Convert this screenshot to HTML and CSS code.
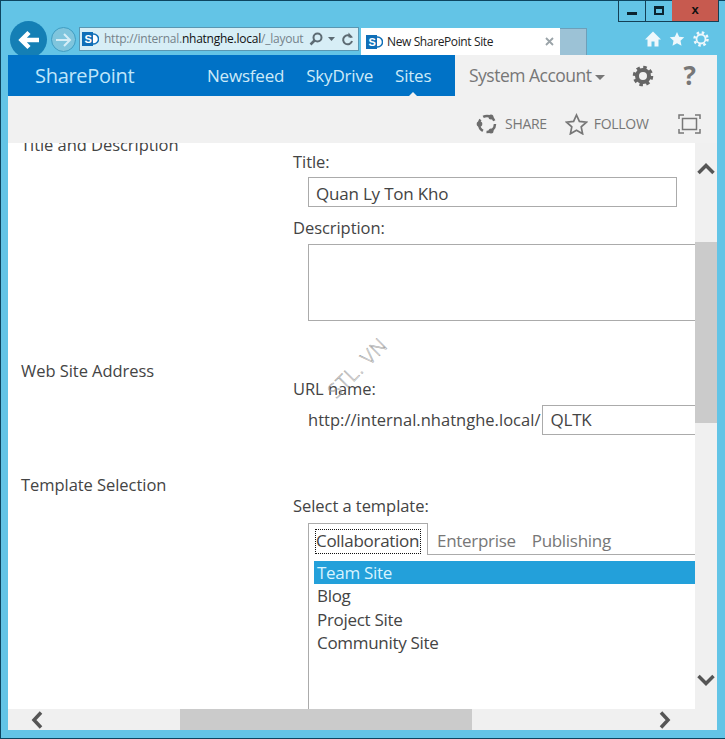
FILE: index.html
```html
<!DOCTYPE html>
<html lang="en">
<head>
<meta charset="utf-8">
<title>New SharePoint Site</title>
<link rel="stylesheet" href="styles.css">
</head>
<body>
<div class="window">
  <header class="chrome">
    <div class="controls">
      <div class="ctl ctl-min"><span class="min-glyph"></span></div>
      <div class="ctl ctl-max"><span class="max-glyph"></span></div>
      <div class="ctl ctl-close">x</div>
    </div>
    <div class="toolbar">
      <div class="back"><svg width="24" height="22" viewBox="0 0 24 22"><path d="M22 11H6M12 3.500 4.500 11l7.500 7.500" fill="none" stroke="#fff" stroke-width="4.500"/></svg></div>
      <div class="forward"><svg width="18" height="16" viewBox="0 0 18 16"><path d="M1 8h14M9 2l6 6-6 6" fill="none" stroke="#d5eef7" stroke-width="2"/></svg></div>
      <div class="address">
        <svg class="sp" width="17" height="16" viewBox="0 0 17 16"><circle cx="11.500" cy="8" r="5" fill="#fff" stroke="#0f6fb8" stroke-width="1.500"/><rect x="0" y="1" width="11" height="14" fill="#0f6fb8"/><text x="2.500" y="12" class="sp-s">S</text></svg>
        <span class="url">http://internal.<b>nhatnghe.local</b>/_layout</span>
        <svg class="addr-ico" width="14" height="14" viewBox="0 0 14 14"><circle cx="8.500" cy="5.500" r="4" fill="none" stroke="#5d6b73" stroke-width="2"/><path d="M5.500 8.500 1.500 12.500" stroke="#5d6b73" stroke-width="2.500"/></svg>
        <svg class="addr-ico" width="8" height="5" viewBox="0 0 8 5"><path d="M0 0h7L3.500 4z" fill="#5d6b73"/></svg>
        <svg class="addr-ico" width="13" height="14" viewBox="0 0 13 14"><path d="M10.500 5.500A4.500 4.500 0 1 0 11 9" fill="none" stroke="#5d6b73" stroke-width="2"/><path d="M7.500 0.500v5h4.500z" fill="#5d6b73"/></svg>
      </div>
      <div class="tab">
        <svg class="sp" width="17" height="16" viewBox="0 0 17 16"><circle cx="11.500" cy="8" r="5" fill="#fff" stroke="#0f6fb8" stroke-width="1.500"/><rect x="0" y="1" width="11" height="14" fill="#0f6fb8"/><text x="2.500" y="12" class="sp-s">S</text></svg>
        <span class="tab-title">New SharePoint Site</span>
        <svg class="tab-x" width="9" height="9" viewBox="0 0 9 9"><path d="M1 1l7 7M8 1 1 8" stroke="#9aa3a8" stroke-width="1.800"/></svg>
      </div>
      <div class="newtab"></div>
      <div class="tools">
        <svg width="16" height="16" viewBox="0 0 16 16"><path d="M8 0.500 0 8.500h2.500V15.500h4v-5h3v5h4V8.500H16z" fill="#eef8fc"/></svg>
        <svg width="16" height="16" viewBox="0 0 17 16"><path d="M8.500 0.500l2.300 5 5.400.6-4 3.700 1.100 5.400-4.800-2.700-4.800 2.700 1.100-5.400-4-3.700 5.400-.6z" fill="#eef8fc"/></svg>
        <svg width="16" height="16" viewBox="0 0 16 16"><circle cx="8" cy="8" r="4.500" fill="none" stroke="#eef8fc" stroke-width="1.800"/><circle cx="8" cy="8" r="6.500" fill="none" stroke="#eef8fc" stroke-width="2.500" stroke-dasharray="2.500 2.600"/></svg>
      </div>
    </div>
  </header>

  <div class="page">
    <div class="suite">
      <div class="suite-blue">
        <span class="brand">SharePoint</span>
        <nav class="nav">
          <span>Newsfeed</span>
          <span>SkyDrive</span>
          <span class="nav-active">Sites</span>
        </nav>
      </div>
      <div class="suite-user">
        <span class="account">System Account</span>
        <svg class="caret" width="10" height="5" viewBox="0 0 10 5"><path d="M0 0h10L5 5z" fill="#777"/></svg>
        <svg class="gear" width="22" height="22" viewBox="0 0 22 22"><circle cx="11" cy="11" r="6" fill="none" stroke="#666" stroke-width="4"/><circle cx="11" cy="11" r="8.500" fill="none" stroke="#666" stroke-width="3.500" stroke-dasharray="3.400 3.270"/></svg>
        <span class="help">?</span>
      </div>
    </div>
    <div class="actions">
      <svg width="22" height="22" viewBox="0 0 22 22"><circle cx="11" cy="11" r="8" fill="none" stroke="#6d6d6d" stroke-width="2.500" stroke-dasharray="13 3.750"/><circle cx="3.500" cy="11" r="2.800" fill="#6d6d6d"/><circle cx="15" cy="4" r="2.500" fill="#6d6d6d"/><circle cx="15" cy="18" r="2.500" fill="#6d6d6d"/></svg>
      <span class="act-label">SHARE</span>
      <svg class="act-star" width="23" height="22" viewBox="0 0 23 22"><path d="M11.500 2l2.900 6.400 7 .8-5.200 4.700 1.400 6.900-6.100-3.500-6.100 3.500 1.400-6.900L1.600 9.200l7-.8z" fill="none" stroke="#777" stroke-width="1.700"/></svg>
      <span class="act-label">FOLLOW</span>
      <svg class="act-focus" width="23" height="20" viewBox="0 0 23 20"><path d="M1 5V1h5M17 1h5v4M22 15v4h-5M6 19H1v-4" fill="none" stroke="#777" stroke-width="1.500"/><rect x="4.500" y="4.500" width="14" height="11" fill="none" stroke="#777" stroke-width="1.500"/></svg>
    </div>
    <div class="viewport">
      <div class="scroller">
        <main class="form">
          <section class="row row-title">
            <h2 class="row-head">Title and Description</h2>
            <div class="fields">
              <label class="lbl">Title:</label>
              <div class="input input-title">Quan Ly Ton Kho</div>
              <label class="lbl lbl-desc">Description:</label>
              <div class="textarea"></div>
            </div>
          </section>
          <section class="row row-url">
            <h2 class="row-head">Web Site Address</h2>
            <div class="fields fields-url">
              <label class="lbl">URL name:</label>
              <div class="url-line"><span>http://internal.nhatnghe.local/</span><div class="input input-url">QLTK</div></div>
            </div>
          </section>
          <section class="row row-tpl">
            <h2 class="row-head">Template Selection</h2>
            <div class="fields fields-tpl">
              <label class="lbl">Select a template:</label>
              <div class="tabset">
                <div class="tabbar">
                  <div class="t-tab"><span class="t-focus">Collaboration</span></div>
                  <span class="t-other">Enterprise</span>
                  <span class="t-other">Publishing</span>
                </div>
                <ul class="list">
                  <li class="selected">Team Site</li>
                  <li>Blog</li>
                  <li>Project Site</li>
                  <li>Community Site</li>
                </ul>
              </div>
            </div>
          </section>
        </main>
        <div class="watermark">STL. VN</div>
      </div>
      <div class="vbar">
        <svg width="18" height="12" viewBox="0 0 18 12"><path d="M1.500 10 9 2.500 16.500 10" fill="none" stroke="#555" stroke-width="3.500"/></svg>
        <div class="vtrack"><div class="vthumb"></div></div>
        <svg width="18" height="12" viewBox="0 0 18 12"><path d="M1.500 2 9 9.500 16.500 2" fill="none" stroke="#555" stroke-width="3.500"/></svg>
      </div>
      <div class="hbar">
        <svg width="12" height="18" viewBox="0 0 12 18"><path d="M10 1.500 3 9l7 7.500" fill="none" stroke="#555" stroke-width="3.500"/></svg>
        <div class="htrack"><div class="hthumb"></div></div>
        <svg width="12" height="18" viewBox="0 0 12 18"><path d="M2 1.500 9 9l-7 7.500" fill="none" stroke="#555" stroke-width="3.500"/></svg>
      </div>
      <div class="corner"></div>
    </div>
  </div>
</div>
</body>
</html>
```

FILE: styles.css
```css
* { box-sizing: border-box; }
html, body { margin: 0; padding: 0; }
body { width: 725px; height: 739px; overflow: hidden; font-family: "Open Sans", "Noto Sans", sans-serif; color: #444; background: #63c4e6; }
.window { position: relative; width: 725px; height: 739px; display: flex; flex-direction: column; padding: 0 8px 8px 7px; background: #63c4e6; border: 1px solid #0d4560; border-width: 1px 0 1px 1px; }
.chrome { height: 54px; margin: 0 -8px 0 -7px; flex: none; position: relative; }
.controls { position: absolute; right: 6px; top: -1px; height: 22px; width: 101px; display: flex; border: 1px solid #143f55; border-top: 0; }
.ctl { display: flex; align-items: center; justify-content: center; }
.ctl-min { width: 27px; border-right: 1px solid #143f55; }
.ctl-max { width: 26px; }
.ctl-close { flex: 1; background: #c75a4f; color: #111; font: bold 13px "Liberation Sans", sans-serif; padding-bottom: 3px; }
.min-glyph { width: 10px; height: 3px; background: #0b2430; margin-top: 5px; }
.max-glyph { width: 10px; height: 9px; border: 2px solid #0b2430; border-top-width: 3px; }
.toolbar { position: absolute; left: 0; right: 0; top: 19px; height: 35px; }
.toolbar > * { position: absolute; }
.back { left: 9px; top: 1px; width: 37px; height: 37px; border-radius: 50%; background: #147fb5; display: flex; align-items: center; justify-content: center; }
.forward { left: 50px; top: 7px; width: 25px; height: 25px; border-radius: 50%; background: #7fc5dd; border: 1px solid #3f9dc2; display: flex; align-items: center; justify-content: center; }
.address { left: 78px; top: 7px; width: 280px; height: 24px; background: #d7eef6; border: 1px solid #5a97b2; display: flex; align-items: center; padding: 0 2px; gap: 5px; }
.sp { flex: none; }
.sp-s { font: bold 11px "Liberation Sans", sans-serif; fill: #fff; }
.url { font-size: 12px; line-height: 14px; color: #75828a; white-space: nowrap; width: 200px; flex: none; letter-spacing: -.24px; }
.url b { font-weight: 400; color: #111; }
.addr-ico { flex: none; }
.tab { left: 360px; top: 8px; width: 199px; height: 27px; background: #fff; display: flex; align-items: center; padding: 0 6px 0 5px; gap: 4px; }
.tab-title { font-size: 12px; color: #222; flex: 1; white-space: nowrap; letter-spacing: -.38px; }
.newtab { left: 559px; top: 8px; width: 27px; height: 27px; background: #9cc2d6; border: 1px solid #6d9fb9; border-bottom: 0; border-left: 0; }
.tools { left: 644px; top: 11px; width: 64px; display: flex; justify-content: space-between; }
.page { flex: 1; display: flex; flex-direction: column; min-height: 0; background: #f1f1f1; }
.suite { display: flex; height: 41px; flex: none; }
.suite-blue { width: 447px; background: #0072c6; color: #cdeaf8; display: flex; align-items: center; position: relative; }
.brand { font-size: 20px; line-height: 41px; margin-left: 27px; width: 172px; letter-spacing: -.3px; color: #bfe6fa; }
.nav { display: flex; gap: 22px; font-size: 17px; line-height: 41px; letter-spacing: -.2px; }
.nav-active { position: relative; }
.nav-active::after { content: ""; position: absolute; left: 50%; bottom: 0; margin-left: -4px; border: 4px solid transparent; border-top: 0; border-bottom-color: #f1f1f1; }
.suite-user { flex: 1; display: flex; align-items: center; padding-left: 14px; color: #777; }
.account { font-size: 17.500px; letter-spacing: -.5px; line-height: 41px; }
.caret { margin: 3px 0 0 3px; }
.gear { margin-left: 27px; }
.help { font: bold 26px "Open Sans", sans-serif; line-height: 41px; margin-left: 30px; color: #777; }
.actions { height: 47px; flex: none; display: flex; align-items: center; padding: 8px 0 0 468px; }
.act-label { font-size: 14px; color: #777; letter-spacing: -.3px; margin-left: 7px; }
.act-star { margin-left: 18px; }
.act-star + .act-label { margin-left: 6px; }
.act-focus { margin-left: 29px; }
.viewport { flex: 1; min-height: 0; background: #fff; display: grid; grid-template-columns: 687px 22px; grid-template-rows: 566px 21px; }
.scroller { position: relative; overflow: hidden; background: #fff; }
.form { margin-top: -9px; padding-left: 13px; width: 1000px; font-size: 16.500px; color: #444; letter-spacing: -.05px; }
.row { display: grid; grid-template-columns: 272px 1fr; }
.row-head { font-size: 16.500px; font-weight: 400; line-height: 22px; margin: 0; }
.lbl { display: block; line-height: 22px; }
.fields { padding-top: 17px; }
.input { border: 1px solid #ababab; height: 30px; line-height: 28px; font-size: 17px; padding-left: 7px; background: #fff; color: #444; letter-spacing: -.2px; }
.input-title { width: 369px; margin: 4px 0 0 15px; line-height: 31px; }
.lbl-desc { margin-top: 10px; }
.textarea { border: 1px solid #ababab; height: 77px; width: 600px; margin: 5px 0 0 15px; }
.row-url { margin-top: 39px; }
.fields-url { padding-top: 18px; }
.url-line { display: flex; align-items: center; margin: 5px 0 0 15px; line-height: 30px; }
.url-line span { margin-right: 2px; white-space: nowrap; letter-spacing: .02px; }
.input-url { width: 300px; }
.row-tpl { margin-top: 39px; }
.fields-tpl { padding-top: 21px; }
.tabset { margin: 6px 0 0 15px; width: 600px; height: 400px; border-left: 1px solid #ababab; }
.tabbar { display: flex; align-items: flex-end; height: 32px; border-bottom: 1px solid #ababab; font-size: 17px; color: #777; letter-spacing: -.3px; position: relative; }
.t-tab { height: 32px; width: 119px; margin-bottom: -1px; background: #fff; border: 1px solid #ababab; border-left: 0; border-bottom: 0; padding: 6px 0 0 7px; color: #444; flex: none; }
.t-focus { display: block; width: 104px; height: 23px; line-height: 21px; outline: 1px dotted #111; white-space: nowrap; }
.t-other { line-height: 27px; margin-left: 9px; margin-right: 7px; }
.list { list-style: none; margin: 6px 0 0 5px; padding: 0; font-size: 17px; letter-spacing: -.3px; }
.list li { height: 23.300px; line-height: 23px; padding-left: 3px; }
.list .selected { background: #23a0da; color: #d8f4ff; }
.watermark { position: absolute; left: 312px; top: 211px; font-size: 20px; font-weight: 300; color: transparent; -webkit-text-stroke: .5px #999; transform: rotate(-45deg); transform-origin: center; white-space: nowrap; letter-spacing: 1px; }
.vbar { background: #f0f0f0; display: flex; flex-direction: column; align-items: center; padding: 20px 0 23px; }
.vtrack { flex: 1; width: 100%; padding-top: 57px; margin: 10px 0; }
.vthumb { height: 181px; background: #cbcbcb; }
.hbar { background: #f0f0f0; display: flex; align-items: center; padding: 0 24px 0 23px; }
.htrack { flex: 1; height: 100%; padding-left: 137px; }
.hthumb { width: 292px; height: 100%; background: #cbcbcb; }
.corner { background: #f0f0f0; }
```
